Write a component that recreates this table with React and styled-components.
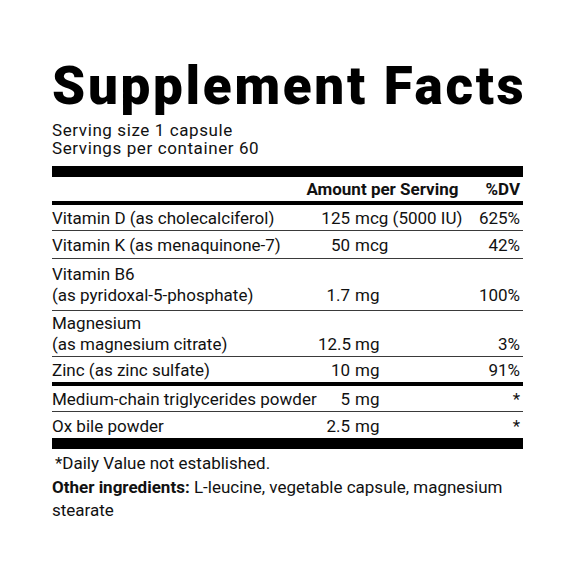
import React from 'react'
import styled, { createGlobalStyle } from 'styled-components'

const GlobalStyle = createGlobalStyle`
    body {
        margin: 0;
        background: #fff;
        font-family: Roboto, "Liberation Sans", sans-serif;
        color: #111;
    }
`

const Label = styled.div`
    width: 471px;
    padding: 60px 0 0 52px;
`

const Title = styled.h1`
    margin: 0;
    font-size: 53px;
    font-weight: 900;
    line-height: 52px;
    letter-spacing: 2.7px;
    color: #000;
    white-space: nowrap;
`

const Serving = styled.div`
    margin-top: 9px;
    font-size: 17px;
    line-height: 18px;
    letter-spacing: 0.6px;
`

const Bar = styled.div`
    height: ${p => p.$h}px;
    background: #000;
    margin-top: ${p => p.$mt || 0}px;
`

const HeaderRow = styled.div`
    display: flex;
    justify-content: flex-end;
    gap: 27px;
    padding: 2px 3px 1px 0;
    font-size: 17px;
    font-weight: 700;
    line-height: 21px;
`

const Row = styled.div`
    display: grid;
    grid-template-columns: 266px 32px 109px 1fr;
    align-items: end;
    padding: ${p => p.$pt}px 3px ${p => p.$pb}px 0;
    font-size: 17px;
    line-height: 21px;
    border-bottom: ${p => (p.$last ? 'none' : '1px solid #3a3a3a')};
`

const Name = styled.div`
    white-space: nowrap;
`

const Num = styled.div`
    text-align: right;
    white-space: nowrap;
`

const Unit = styled.div`
    padding-left: 5px;
    white-space: nowrap;
`

const Dv = styled.div`
    text-align: right;
`

const Footnote = styled.div`
    margin-top: 4px;
    padding-left: 3px;
    font-size: 17px;
    line-height: 21px;
`

const Other = styled.p`
    margin: 2px 0 0;
    font-size: 17px;
    line-height: 23px;

    b {
        font-weight: 700;
    }
`

const group1 = [
    { name: ['Vitamin D (as cholecalciferol)'], num: '125', unit: 'mcg (5000 IU)', dv: '625%', pt: 3, pb: 1 },
    { name: ['Vitamin K (as menaquinone-7)'], num: '50', unit: 'mcg', dv: '42%', pt: 4, pb: 2 },
    { name: ['Vitamin B6', '(as pyridoxal-5-phosphate)'], num: '1.7', unit: 'mg', dv: '100%', pt: 5, pb: 4 },
    { name: ['Magnesium', '(as magnesium citrate)'], num: '12.5', unit: 'mg', dv: '3%', pt: 2, pb: 1 },
    { name: ['Zinc (as zinc sulfate)'], num: '10', unit: 'mg', dv: '91%', pt: 3, pb: 1 },
]

const group2 = [
    { name: ['Medium-chain triglycerides powder'], num: '5', unit: 'mg', dv: '*', pt: 3, pb: 1 },
    { name: ['Ox bile powder'], num: '2.5', unit: 'mg', dv: '*', pt: 4, pb: 1 },
]

const renderRows = rows =>
    rows.map((r, i) => (
        <Row key={r.name[0]} $pt={r.pt} $pb={r.pb} $last={i === rows.length - 1}>
            <Name>
                {r.name.map(line => <div key={line}>{line}</div>)}
            </Name>
            <Num>{r.num}</Num>
            <Unit>{r.unit}</Unit>
            <Dv>{r.dv}</Dv>
        </Row>
    ))

export default function App() {
    return (
        <>
            <GlobalStyle />
            <Label>
                <Title>Supplement Facts</Title>
                <Serving>
                    <div>Serving size 1 capsule</div>
                    <div>Servings per container 60</div>
                </Serving>
                <Bar $h={11} $mt={9} />
                <HeaderRow>
                    <span>Amount per Serving</span>
                    <span>%DV</span>
                </HeaderRow>
                <Bar $h={4} />
                {renderRows(group1)}
                <Bar $h={4} />
                {renderRows(group2)}
                <Bar $h={11} />
                <Footnote>*Daily Value not established.</Footnote>
                <Other>
                    <b>Other ingredients:</b> L-leucine, vegetable capsule, magnesium stearate
                </Other>
            </Label>
        </>
    )
}
